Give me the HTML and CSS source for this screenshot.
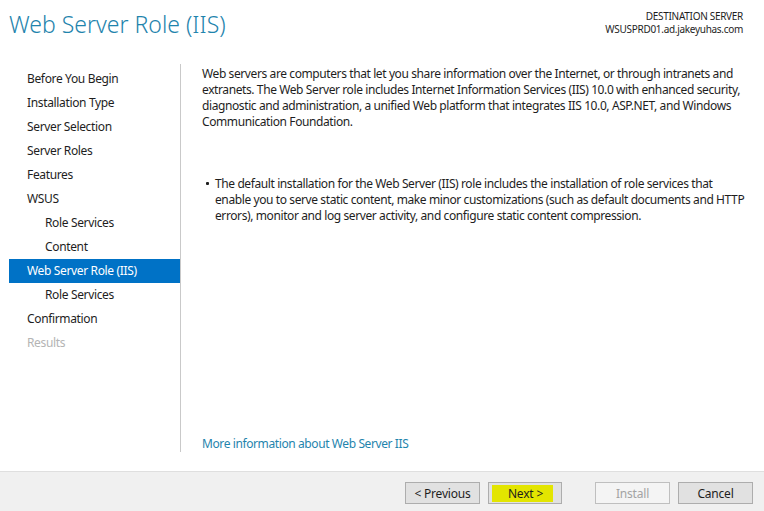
FILE: index.html
```html
<!DOCTYPE html>
<html>
<head>
<meta charset="utf-8">
<link rel="stylesheet" href="styles.css">
</head>
<body>
<div class="window">
  <header class="header">
    <h1 class="title">Web Server Role (IIS)</h1>
    <div class="dest">
      <div>DESTINATION SERVER</div>
      <div>WSUSPRD01.ad.jakeyuhas.com</div>
    </div>
  </header>
  <div class="main">
    <nav class="nav">
      <div class="item">Before You Begin</div>
      <div class="item">Installation Type</div>
      <div class="item">Server Selection</div>
      <div class="item">Server Roles</div>
      <div class="item">Features</div>
      <div class="item">WSUS</div>
      <div class="item sub">Role Services</div>
      <div class="item sub">Content</div>
      <div class="item active">Web Server Role (IIS)</div>
      <div class="item sub">Role Services</div>
      <div class="item">Confirmation</div>
      <div class="item disabled">Results</div>
    </nav>
    <section class="content">
      <p class="para">Web servers are computers that let you share information over the Internet, or through intranets and<br>extranets. The Web Server role includes Internet Information Services (IIS) 10.0 with enhanced security,<br>diagnostic and administration, a unified Web platform that integrates IIS 10.0, ASP.NET, and Windows<br>Communication Foundation.</p>
      <ul class="bullets">
        <li>The default installation for the Web Server (IIS) role includes the installation of role services that<br>enable you to serve static content, make minor customizations (such as default documents and HTTP<br>errors), monitor and log server activity, and configure static content compression.</li>
      </ul>
      <a class="link">More information about Web Server IIS</a>
    </section>
  </div>
  <footer class="footer">
    <button class="btn">&lt; Previous</button>
    <button class="btn next"><span class="hl">Next &gt;</span></button>
    <button class="btn install" disabled>Install</button>
    <button class="btn">Cancel</button>
  </footer>
</div>
</body>
</html>
```
FILE: styles.css
```css
* { box-sizing: border-box; }
html, body { margin: 0; padding: 0; background: #ffffff; }
body {
  font-family: "Noto Sans", "Open Sans", sans-serif;
  font-size: 12px;
  letter-spacing: -0.35px;
  color: #1e1e1e;
}
.window {
  width: 764px;
  height: 511px;
  display: flex;
  flex-direction: column;
  background: #ffffff;
}
.header {
  height: 64px;
  flex-shrink: 0;
  display: flex;
  justify-content: space-between;
  align-items: flex-start;
}
.title {
  margin: 0;
  padding: 9px 0 0 9px;
  font-weight: 300;
  font-size: 23px;
  line-height: 30px;
  color: #1f84ad;
  letter-spacing: 0;
}
.dest {
  padding: 10px 21px 0 0;
  text-align: right;
  font-size: 10px;
  line-height: 13px;
  letter-spacing: -0.3px;
  color: #1e1e1e;
}
.main {
  flex: 1;
  display: flex;
  min-height: 0;
}
.nav {
  flex: 0 0 181px;
  width: 181px;
  padding: 3px 0 0 9px;
  border-right: 1px solid #c9c9c9;
  margin-bottom: 19px;
}
.item {
  height: 24px;
  line-height: 24px;
  padding-left: 18px;
  color: #1e1e1e;
  white-space: nowrap;
}
.item.sub { padding-left: 36px; }
.item.active { background: #0072c6; color: #ffffff; }
.item.disabled { color: #b4b4b4; }
.content {
  flex: 1;
  min-width: 0;
  display: flex;
  flex-direction: column;
  padding: 2px 0 0 21px;
  letter-spacing: -0.4px;
}
.para {
  margin: 0;
  line-height: 16px;
  white-space: nowrap;
}
.bullets {
  margin: 46px 0 0 0;
  padding: 0 0 0 13px;
  line-height: 16px;
  white-space: nowrap;
  list-style: none;
}
.bullets li { position: relative; }
.bullets li::before {
  content: "";
  position: absolute;
  left: -9px;
  top: 6px;
  width: 3px;
  height: 3px;
  border-radius: 1px;
  background: #1e1e1e;
}
.link {
  margin-top: auto;
  margin-bottom: 19px;
  color: #1f84ad;
  line-height: 16px;
}
.footer {
  height: 40px;
  flex-shrink: 0;
  background: #f0f0f0;
  border-top: 1px solid #dfdfdf;
  display: flex;
  align-items: flex-start;
  justify-content: flex-end;
  padding: 10px 11px 0 0;
  gap: 8px;
}
.btn {
  width: 75px;
  height: 22px;
  padding: 0;
  background: #e1e1e1;
  border: 1px solid #adadad;
  font-family: inherit;
  font-size: 12px;
  letter-spacing: -0.2px;
  color: #1e1e1e;
}
.btn.next { width: 74px; margin-right: 25px; padding: 2px 8px 1px 3px; }
.hl {
  display: block;
  height: 100%;
  background: #e3e500;
  line-height: 17px;
  padding-left: 6px;
}
.btn.install {
  background: #f4f4f4;
  border-color: #bfbfbf;
  color: #a3a3a3;
}
```
